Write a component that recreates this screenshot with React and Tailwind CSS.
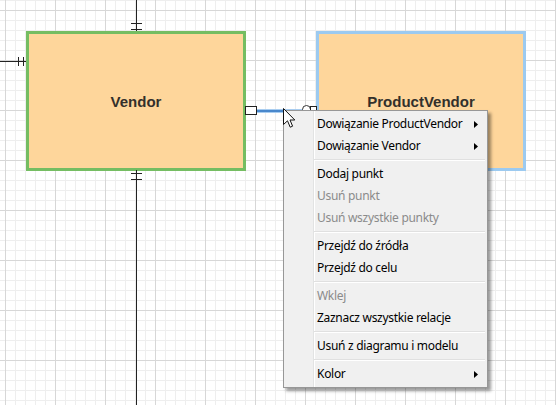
import React from 'react';

const menuItems = [
    { label: 'Dowiązanie ProductVendor', sub: true },
    { label: 'Dowiązanie Vendor', sub: true },
    { sep: true },
    { label: 'Dodaj punkt' },
    { label: 'Usuń punkt', disabled: true },
    { label: 'Usuń wszystkie punkty', disabled: true },
    { sep: true },
    { label: 'Przejdź do źródła' },
    { label: 'Przejdź do celu' },
    { sep: true },
    { label: 'Wklej', disabled: true },
    { label: 'Zaznacz wszystkie relacje' },
    { sep: true },
    { label: 'Usuń z diagramu i modelu' },
    { sep: true },
    { label: 'Kolor', sub: true },
];

const Connectors = () => (
    <svg className="absolute inset-0" width="556" height="405" viewBox="0 0 556 405">
        {/* pionowa relacja Vendor */}
        <g stroke="#222" strokeWidth="1" shapeRendering="crispEdges">
            <line x1="136.5" y1="0" x2="136.5" y2="31" />
            <line x1="131" y1="23.5" x2="142" y2="23.5" />
            <line x1="131" y1="29.5" x2="142" y2="29.5" />
            <line x1="136.5" y1="170" x2="136.5" y2="405" />
            <line x1="131" y1="173.5" x2="142" y2="173.5" />
            <line x1="131" y1="179.5" x2="142" y2="179.5" />
            <line x1="0" y1="61.5" x2="26" y2="61.5" />
            <line x1="18.5" y1="57" x2="18.5" y2="66" />
            <line x1="23.5" y1="57" x2="23.5" y2="66" />
        </g>
        {/* zaznaczona relacja */}
        <line x1="256" y1="111" x2="312" y2="111" stroke="#a9cdf0" strokeWidth="4" />
        <line x1="256" y1="111" x2="312" y2="111" stroke="#4a88cc" strokeWidth="2" />
        <rect x="245.5" y="106.5" width="11" height="8" fill="#fff" stroke="#222" shapeRendering="crispEdges" />
        <circle cx="306.5" cy="109.5" r="4" fill="#fff" stroke="#333" />
        <rect x="310.5" y="106.5" width="6" height="8" fill="#fff" stroke="#222" shapeRendering="crispEdges" />
    </svg>
);

const Entity = ({ name, className }) => (
    <div
        className={`absolute flex items-center justify-center pt-[3px] bg-[#fed69b] border-[3px] font-['Liberation_Sans',Arial,sans-serif] text-[15px] font-bold text-[#33302b] ${className}`}
    >
        {name}
    </div>
);

const Cursor = () => (
    <svg className="absolute left-[283px] top-[108px]" width="13" height="21" viewBox="0 0 13 21">
        <path
            d="M0.5 0.5 L0.5 16.5 L4.5 12.8 L7.2 19.2 L9.6 18.2 L7 12 L11.8 12 Z"
            fill="#fff"
            stroke="#111"
            strokeWidth="1"
            strokeLinejoin="miter"
        />
    </svg>
);

const ContextMenu = () => (
    <div className="absolute left-[283px] top-[110px] w-[205px] py-[2px] border border-[#979797] bg-[#f0f0f0] bg-[linear-gradient(to_right,#f0f0f0_29px,#e2e3e3_29px,#e2e3e3_30px,#ffffff_30px,#ffffff_31px,#f0f0f0_31px)] shadow-[3px_3px_3px_rgba(0,0,0,0.4)] font-['Noto_Sans',sans-serif] text-[12px] tracking-[-0.3px]">
        {menuItems.map((item, i) =>
            item.sep ? (
                <div key={i} className="h-[6px] flex items-center">
                    <div className="ml-[30px] mr-[2px] flex-1 h-[2px] border-t border-[#e0e0e0] border-b border-b-white" />
                </div>
            ) : (
                <div
                    key={i}
                    className={`h-[22px] flex items-center pl-[33px] pr-[9px] ${item.disabled ? 'text-[#8b8b8b]' : 'text-black'}`}
                >
                    <span className="flex-1 leading-none">{item.label}</span>
                    {item.sub && (
                        <svg width="4" height="7" viewBox="0 0 4 7">
                            <polygon points="0,0 4,3.5 0,7" fill="#000" />
                        </svg>
                    )}
                </div>
            )
        )}
    </div>
);

const App = () => {
    return (
        <div className="relative w-[556px] h-[405px] overflow-hidden bg-white bg-[linear-gradient(to_right,#d7d7d7_1px,transparent_1px),linear-gradient(to_bottom,#d7d7d7_1px,transparent_1px),linear-gradient(to_right,#eeeeee_1px,transparent_1px),linear-gradient(to_bottom,#eeeeee_1px,transparent_1px)] bg-[size:50px_50px,50px_50px,10px_10px,10px_10px] bg-[position:5px_10px]">
            <Entity name="Vendor" className="left-[26px] top-[31px] w-[220px] h-[140px] border-[#75bd62]" />
            <Entity name="ProductVendor" className="left-[316px] top-[31px] w-[210px] h-[140px] border-[#9ccaf0]" />
            <Connectors />
            <ContextMenu />
            <Cursor />
        </div>
    );
};

export default App;
